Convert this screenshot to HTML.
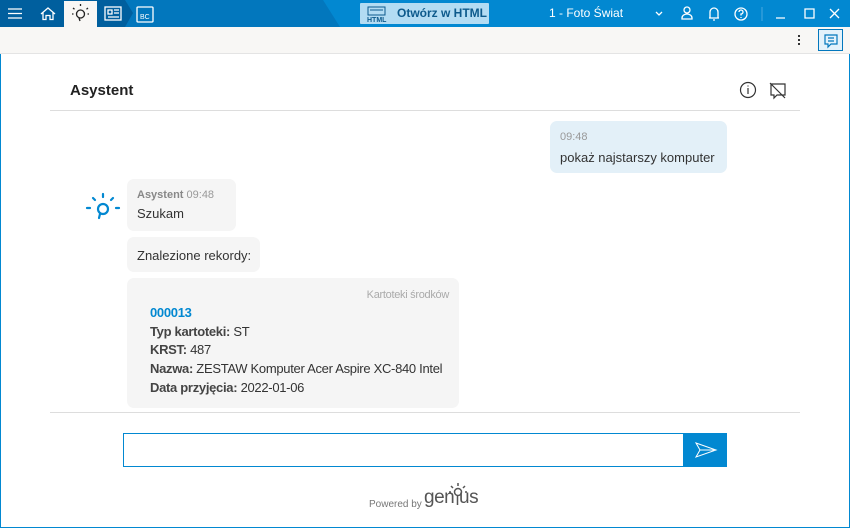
<!DOCTYPE html>
<html><head><meta charset="utf-8"><style>
*{box-sizing:border-box;margin:0;padding:0}
body{width:850px;height:528px;overflow:hidden;font-family:"Liberation Sans",sans-serif;background:#fff;position:relative;color:#333}
.abs{position:absolute}
.win{position:absolute;left:0;top:0;width:850px;height:528px;border:1px solid #0288d1;border-top:none}
.title{position:absolute;left:0;top:0;width:850px;height:27px;background:#0288d1}
.tb{position:absolute;left:0;top:27px;width:850px;height:27px;background:#f8f7f5;border-bottom:1px solid #e4e4e4}
.bubble{position:absolute;background:#f5f5f5;border-radius:7px;font-size:13px}
.b{font-weight:bold;color:#444}
.card div{font-size:13px;line-height:18.7px;color:#333;white-space:nowrap;letter-spacing:-0.3px}
</style></head><body>
<div class="win"></div>
<div class="title">
 <div class="abs" style="left:0;top:0;width:340px;height:27px;background:#0277bd;clip-path:polygon(0 0,323px 0,340px 27px,0 27px)"></div>
 <div class="abs" style="left:0;top:0;width:135px;height:27px;background:#005f9e;clip-path:polygon(0 0,125px 0,133px 13px,125px 27px,0 27px)"></div>
 <div class="abs" style="left:64px;top:1px;width:33px;height:26px;background:#f8f7f5"></div>
 <svg class="abs" style="left:0;top:0" width="330" height="27">
  <g stroke="#fff" stroke-width="1.3" fill="none">
   <path d="M8 9h14M8 13.5h14M8 18h14"/>
   <path d="M41 14l7-6 7 6M43 12.5v7h3v-4h4v4h3v-7"/>
   <rect x="105" y="7" width="16" height="13"/><path d="M108 10h4v4h-4zM114 10h5M114 13h5M108 17h11"/>
   <rect x="137" y="7" width="16" height="15" rx="1"/>
  </g>
  <text x="140" y="19" font-size="7" fill="#fff" font-family="Liberation Sans">BC</text>
  <g stroke="#222" stroke-width="1.3" fill="none"><circle cx="80.5" cy="14" r="4"/><path d="M80.5 4v2M73 8l1.5 1.2M88 8l-1.5 1.2M72 14h1.5M87.5 14h1.5M79 18l1 3"/></g>
 </svg>
 <div class="abs" style="left:360px;top:3px;width:129px;height:21px;background:#b3dcf3;border-radius:1px"></div>
 <svg class="abs" style="left:366px;top:5px" width="22" height="18"><g stroke="#0d5a8c" fill="none" stroke-width="1"><rect x="2" y="2" width="17" height="8"/><path d="M4 5h13"/></g><text x="1" y="17" font-size="7" font-weight="bold" fill="#0d5a8c" font-family="Liberation Sans">HTML</text></svg>
 <div class="abs" style="left:397px;top:6px;font-size:12px;font-weight:bold;color:#0d5a8c">Otwórz w HTML</div>
 <div class="abs" style="left:549px;top:6px;font-size:12px;color:#fff">1 - Foto Świat</div>
 <svg class="abs" style="left:650px;top:0" width="200" height="27"><g stroke="#fff" stroke-width="1.3" fill="none">
  <path d="M6 12l3 3 3-3"/>
  <circle cx="37" cy="10" r="3"/><path d="M32 19v-1a5 4 0 0 1 10 0v1z"/>
  <path d="M59 18h10M60 18v-6a4 4 0 0 1 8 0v6M63 20h2"/>
  <circle cx="91" cy="14" r="6"/><path d="M89 12a2 2 0 1 1 2 2v1.5M91 17v1"/>
  <path d="M112 7v14" stroke="#3aa0dc"/>
  <path d="M126 18h9M155 9h9v9h-9zM180 9l9 9M189 9l-9 9"/>
 </g></svg>
</div>
<div class="tb">
 <div class="abs" style="left:798px;top:8px;width:2px;height:2px;background:#333;box-shadow:0 4px #333,0 8px #333"></div>
 <div class="abs" style="left:818px;top:2px;width:25px;height:22px;border:1px solid #0277bd;background:#e3f2fb"></div>
 <svg class="abs" style="left:823px;top:6px" width="16" height="16"><path d="M2 2h12v9H8l-3 3v-3H2z M5 5h6M5 8h6" stroke="#0277bd" stroke-width="1.2" fill="none"/></svg>
</div>
<div class="abs" style="left:70px;top:82px;font-size:15px;font-weight:bold;color:#222">Asystent</div>
<svg class="abs" style="left:738px;top:80px" width="50" height="20"><g stroke="#333" stroke-width="1.2" fill="none"><circle cx="10" cy="10" r="7.5"/><path d="M10 8v6M10 5.5v1"/><path d="M33 4h14v11h-8l-3 3v-3h-3zM32 3l15 15"/></g></svg>
<div class="abs" style="left:50px;top:110px;width:750px;height:1px;background:#ddd"></div>
<div class="bubble" style="left:550px;top:121px;width:177px;height:52px;background:#e3f0f8"><div style="position:absolute;left:10px;top:10px;font-size:11px;color:#999">09:48</div><div style="position:absolute;left:10px;top:29px;color:#333">pokaż najstarszy komputer</div></div>
<svg class="abs" style="left:85px;top:192px" width="36" height="30"><g stroke="#0288d1" stroke-width="2.2" fill="none" stroke-linecap="round"><circle cx="18" cy="17" r="5"/><path d="M18 2v3M8 6l2 2M28 6l-2 2M2 16h3M31 16h3M15 22l-1 4"/></g></svg>
<div class="bubble" style="left:127px;top:179px;width:109px;height:52px"><div style="position:absolute;left:10px;top:10px;font-size:11px;color:#999"><b style="color:#888">Asystent</b> 09:48</div><div style="position:absolute;left:10px;top:27px">Szukam</div></div>
<div class="bubble" style="left:127px;top:237px;width:133px;height:35px"><div style="position:absolute;left:10px;top:11px">Znalezione rekordy:</div></div>
<div class="bubble card" style="left:127px;top:278px;width:332px;height:130px;padding:10px 10px 0 23px;overflow:hidden">
 <div style="text-align:right;font-size:11px;color:#aaa;line-height:14px">Kartoteki środków</div>
 <div style="color:#0288d1;font-weight:bold;margin-top:2px">000013</div>
 <div><span class="b">Typ kartoteki:</span> ST</div>
 <div><span class="b">KRST:</span> 487</div>
 <div><span class="b">Nazwa:</span> ZESTAW Komputer Acer Aspire XC-840 Intel</div>
 <div><span class="b">Data przyjęcia:</span> 2022-01-06</div>
</div>
<div class="abs" style="left:50px;top:412px;width:750px;height:1px;background:#ddd"></div>
<div class="abs" style="left:123px;top:433px;width:604px;height:34px;border:1px solid #0288d1"></div>
<div class="abs" style="left:683px;top:433px;width:44px;height:34px;background:#0288d1"></div>
<svg class="abs" style="left:694px;top:440px" width="24" height="20"><path d="M2 3l20 7-20 7 4-7zM6 10h14" stroke="#fff" stroke-width="1" fill="none"/></svg>
<div class="abs" style="left:369px;top:499px;font-size:10px;color:#777">Powered by</div>
<div class="abs" style="left:424px;top:487px;font-size:19px;color:#555;letter-spacing:-0.5px">gen</div>
<div class="abs" style="left:459px;top:487px;font-size:19px;color:#555;letter-spacing:-0.5px">us</div>
<svg class="abs" style="left:446px;top:481px" width="24" height="26"><g stroke="#555" stroke-width="1.5" fill="none"><circle cx="12" cy="11" r="3.5"/><path d="M12 2v3M5 5l2 2M19 5l-2 2M3 11h2M19 11h2M11.5 15v9"/></g></svg>
</body></html>
